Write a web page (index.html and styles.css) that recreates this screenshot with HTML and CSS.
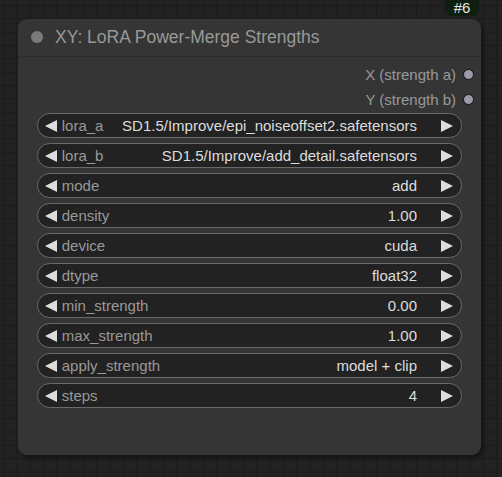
FILE: index.html
```html
<!DOCTYPE html>
<html>
<head>
<meta charset="utf-8">
<link rel="stylesheet" href="styles.css">
</head>
<body>
<div class="canvas">
  <div class="node">
    <div class="badge">#6</div>
    <div class="title">
      <span class="title-dot"></span>
      <span class="title-text">XY: LoRA Power-Merge Strengths</span>
    </div>
    <div class="body">
      <div class="outputs">
        <div class="output"><span class="out-label">X (strength a)</span><span class="slot"></span></div>
        <div class="output"><span class="out-label">Y (strength b)</span><span class="slot"></span></div>
      </div>
      <div class="widgets">
        <div class="widget"><span class="arrow left"></span><span class="label">lora_a</span><span class="value">SD1.5/Improve/epi_noiseoffset2.safetensors</span><span class="arrow right"></span></div>
        <div class="widget"><span class="arrow left"></span><span class="label">lora_b</span><span class="value">SD1.5/Improve/add_detail.safetensors</span><span class="arrow right"></span></div>
        <div class="widget"><span class="arrow left"></span><span class="label">mode</span><span class="value">add</span><span class="arrow right"></span></div>
        <div class="widget"><span class="arrow left"></span><span class="label">density</span><span class="value">1.00</span><span class="arrow right"></span></div>
        <div class="widget"><span class="arrow left"></span><span class="label">device</span><span class="value">cuda</span><span class="arrow right"></span></div>
        <div class="widget"><span class="arrow left"></span><span class="label">dtype</span><span class="value">float32</span><span class="arrow right"></span></div>
        <div class="widget"><span class="arrow left"></span><span class="label">min_strength</span><span class="value">0.00</span><span class="arrow right"></span></div>
        <div class="widget"><span class="arrow left"></span><span class="label">max_strength</span><span class="value">1.00</span><span class="arrow right"></span></div>
        <div class="widget"><span class="arrow left"></span><span class="label">apply_strength</span><span class="value">model + clip</span><span class="arrow right"></span></div>
        <div class="widget"><span class="arrow left"></span><span class="label">steps</span><span class="value">4</span><span class="arrow right"></span></div>
      </div>
    </div>
  </div>
</div>
</body>
</html>
```
FILE: styles.css
```css
html, body {
  margin: 0;
  padding: 0;
  width: 502px;
  height: 477px;
  overflow: hidden;
}
body {
  background-color: #222222;
  background-image:
    linear-gradient(to right, #1a1a1a 1px, transparent 1px),
    linear-gradient(to bottom, #1a1a1a 1px, transparent 1px);
  background-size: 13.33px 13.33px;
  background-position: 3px 5px;
  font-family: "Liberation Sans", Arial, sans-serif;
}
.canvas {
  padding: 19px 0 0 18px;
}
.node {
  position: relative;
  width: 463px;
  height: 436px;
  background: #353535;
  border-radius: 9px;
  box-shadow: 2px 3px 4px rgba(0, 0, 0, 0.45);
  box-sizing: border-box;
}
.badge {
  position: absolute;
  top: -19px;
  right: 2px;
  width: 34px;
  height: 16px;
  background: #0f1f0f;
  border-radius: 0 0 6px 6px;
  color: #e6e6e6;
  font-size: 15px;
  line-height: 16px;
  text-align: center;
}
.title {
  height: 37.5px;
  display: flex;
  align-items: center;
  border-bottom: 1px solid #2c2c2c;
  box-sizing: border-box;
  border-radius: 9px 9px 0 0;
}
.title-dot {
  width: 12px;
  height: 12px;
  border-radius: 50%;
  background: #7a7a7a;
  margin-left: 12.5px;
}
.title-text {
  margin-left: 12.5px;
  font-size: 17.5px;
  color: #999999;
  padding-top: 1px;
}
.body {
  padding-top: 5px;
}
.outputs {
  display: flex;
  flex-direction: column;
}
.output {
  height: 25px;
  display: flex;
  align-items: center;
  justify-content: flex-end;
  padding-right: 7px;
}
.out-label {
  font-size: 15px;
  color: #999999;
  margin-right: 7px;
}
.slot {
  width: 9px;
  height: 9px;
  border-radius: 50%;
  background: #9a9aaa;
  border: 1.5px solid #111;
}
.widgets {
  margin-top: 1.5px;
  padding: 0 19px 0 18.75px;
  display: flex;
  flex-direction: column;
  gap: 5px;
}
.widget {
  height: 25px;
  box-sizing: border-box;
  border: 1px solid #6a6a6a;
  border-radius: 13px;
  background: #222222;
  display: flex;
  align-items: center;
  font-size: 15px;
  padding-left: 7px;
  padding-right: 8px;
}
.arrow {
  width: 0;
  height: 0;
  border-top: 6px solid transparent;
  border-bottom: 6px solid transparent;
}
.arrow.left {
  border-right: 12px solid #dddddd;
}
.arrow.right {
  border-left: 12px solid #dddddd;
}
.label {
  margin-left: 5px;
  color: #999999;
  white-space: nowrap;
}
.value {
  flex: 1;
  text-align: right;
  color: #dddddd;
  white-space: nowrap;
  margin-right: 24px;
}
```
